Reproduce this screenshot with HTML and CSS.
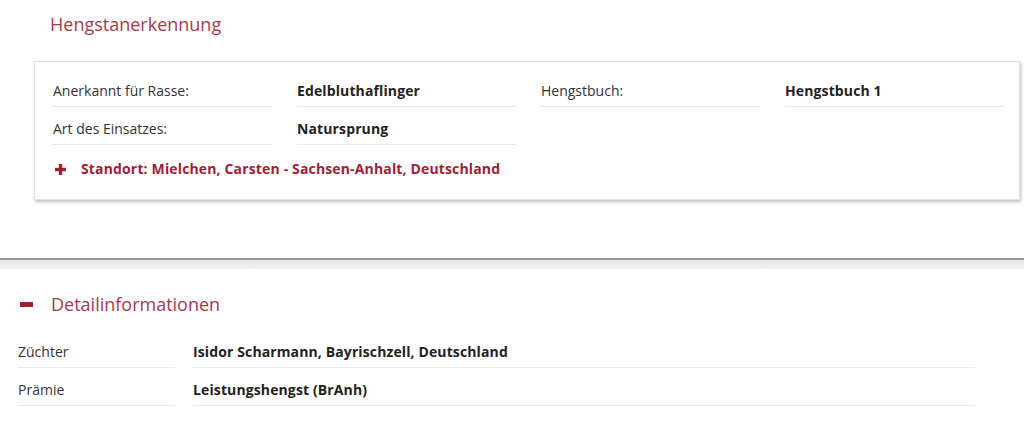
FILE: index.html
```html
<!DOCTYPE html>
<html lang="de">
<head>
<meta charset="utf-8">
<link rel="stylesheet" href="styles.css">
</head>
<body>
<section class="top">
  <h2 class="title">Hengstanerkennung</h2>
  <div class="card">
    <div class="grid">
      <div class="cell label">Anerkannt für Rasse:</div>
      <div class="cell value">Edelbluthaflinger</div>
      <div class="cell label">Hengstbuch:</div>
      <div class="cell value">Hengstbuch 1</div>
      <div class="cell label">Art des Einsatzes:</div>
      <div class="cell value">Natursprung</div>
    </div>
    <div class="standort">
      <svg class="ico" width="11" height="11" viewBox="0 0 11 11"><rect x="3.8" y="0" width="3.4" height="11" fill="#a31d35"/><rect x="0" y="3.8" width="11" height="3.4" fill="#a31d35"/></svg>
      <span>Standort: Mielchen, Carsten - Sachsen-Anhalt, Deutschland</span>
    </div>
  </div>
</section>
<div class="divider"></div>
<section class="details">
  <h2 class="title title-ico">
    <svg class="ico" width="13" height="5" viewBox="0 0 13 5"><rect x="0" y="0" width="13" height="5" fill="#a31d35"/></svg>
    <span>Detailinformationen</span>
  </h2>
  <div class="dgrid">
    <div class="cell label">Züchter</div>
    <div class="cell value">Isidor Scharmann, Bayrischzell, Deutschland</div>
    <div class="cell label">Prämie</div>
    <div class="cell value">Leistungshengst (BrAnh)</div>
  </div>
</section>
</body>
</html>
```
FILE: styles.css
```css
html, body {
  margin: 0;
  padding: 0;
  background: #fff;
}
body {
  font-family: "Open Sans", "Noto Sans", sans-serif;
  font-size: 14px;
  color: #333;
  width: 1024px;
  height: 428px;
  overflow: hidden;
}
.top {
  padding: 10px 4px 0 34px;
  height: 248px;
  box-sizing: border-box;
}
.title {
  margin: 0;
  font-weight: 400;
  font-size: 18px;
  line-height: 28px;
  color: #a8394a;
}
.top .title {
  padding-left: 16px;
}
.card {
  margin-top: 23px;
  border: 1px solid #e2e2e2;
  box-shadow: 1px 2px 3px rgba(0,0,0,0.25);
  padding: 7px 15px 20px 18px;
  background: #fff;
}
.grid {
  display: grid;
  grid-template-columns: 219px 219px 219px 219px;
  column-gap: 25px;
}
.cell {
  border-bottom: 1px solid #e8e8e8;
  line-height: 20px;
  padding: 12px 0 5px;
}
.label {
  color: #333;
}
.value {
  font-weight: 700;
  color: #222;
  letter-spacing: 0.12px;
}
.standort {
  display: flex;
  align-items: center;
  gap: 15px;
  padding: 14px 0 0 2px;
  font-weight: 700;
  color: #a31d35;
  line-height: 20px;
  letter-spacing: 0.15px;
}
.divider {
  height: 9px;
  border-top: 2px solid #9a9a9a;
  background: linear-gradient(#e4e4e4, #f4f4f4);
  margin-top: 10px;
}
.details {
  padding: 21px 48px 0 18px;
}
.title-ico {
  display: flex;
  align-items: center;
  gap: 18px;
  margin-left: 2px;
}
.dgrid {
  display: grid;
  grid-template-columns: 157px 782px;
  column-gap: 18px;
  margin-top: 12px;
}
```
